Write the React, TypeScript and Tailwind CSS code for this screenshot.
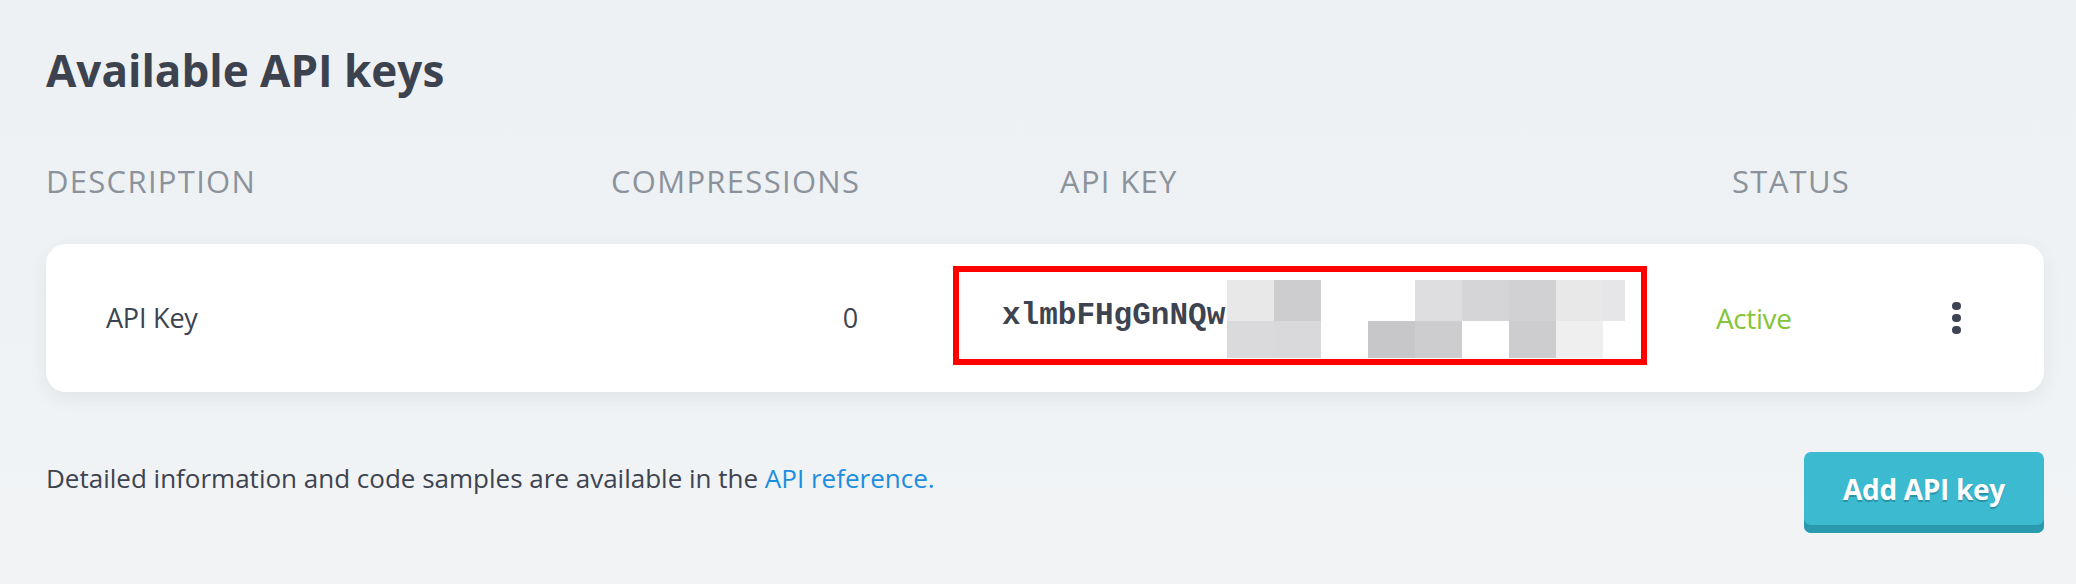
import React from 'react'

// pixelated (redacted) part of the key, [top row, bottom row], null = no block
const blurTop: (string | null)[] = ['#e8e8e9', '#cdcdcf', null, null, '#dedee0', '#d5d5d7', '#d1d1d3', '#e8e8e9', '#e6e6e8']
const blurBottom: (string | null)[] = ['#dadadc', '#d9d9db', null, '#c7c7c9', '#cdcdcf', null, '#cdcdcf', '#efefef', null]

function Redacted() {
  return (
    <div className="absolute left-[268px] top-[8px] flex flex-col">
      <div className="flex h-[41px]">
        {blurTop.map((c, i) => (
          <div
            key={i}
            className={i === 8 ? 'h-full w-[22px]' : 'h-full w-[47px]'}
            style={{ backgroundColor: c ?? 'transparent' }}
          />
        ))}
      </div>
      <div className="flex h-[37px]">
        {blurBottom.map((c, i) => (
          <div
            key={i}
            className={i === 8 ? 'h-full w-[22px]' : 'h-full w-[47px]'}
            style={{ backgroundColor: c ?? 'transparent' }}
          />
        ))}
      </div>
    </div>
  )
}

export default function App() {
  return (
    <div className="min-h-[584px] w-[2076px] bg-gradient-to-b from-[#edf1f3] to-[#f1f3f5] pl-[46px] pr-[32px] pt-[44px] font-['Open_Sans',sans-serif] text-[#3d4350]">
      <h1 className="text-[44px] font-bold leading-[52px] tracking-[0px] text-[#3d424f]">Available API keys</h1>

      {/* table head */}
      <div className="mt-[65px] flex text-[31px] leading-[40px] tracking-[1.3px] text-[#8b929b]">
        <div className="w-[565px]">DESCRIPTION</div>
        <div className="w-[247px] text-right">COMPRESSIONS</div>
        <div className="w-[874px] pl-[202px]">API KEY</div>
        <div>STATUS</div>
      </div>

      {/* key row */}
      <div className="mt-[43px] flex h-[148px] items-center rounded-[20px] bg-white pl-[60px] shadow-[0_6px_18px_rgba(40,60,80,0.07)]">
        <div className="flex w-[752px] items-center justify-between text-[27px] tracking-[-0.2px]">
          <span>API Key</span>
          <span>0</span>
        </div>
        <div className="relative ml-[95px] mt-[-5px] flex h-[99px] w-[694px] items-center border-[6px] border-[#ff0000] pl-[43px]">
          <span className="font-['Liberation_Mono',monospace] text-[31px] font-bold leading-none text-[#3d4350]">xlmbFHgGnNQw</span>
          <Redacted />
        </div>
        <div className="ml-[69px] text-[28px] tracking-[-0.4px] text-[#86c43a]">Active</div>
        <button className="ml-[161px] flex flex-col gap-[3.5px]" aria-label="More">
          <span className="size-[8.5px] rounded-full bg-[#3d4350]" />
          <span className="size-[8.5px] rounded-full bg-[#3d4350]" />
          <span className="size-[8.5px] rounded-full bg-[#3d4350]" />
        </button>
      </div>

      {/* footer */}
      <div className="mt-[60px] flex items-start justify-between">
        <p className="pt-[7px] text-[26px] leading-[39px]">
          Detailed information and code samples are available in the{' '}
          <a href="#" className="text-[#1b8ee0]">API reference.</a>
        </p>
        <button className="h-[81px] w-[240px] rounded-[7px] bg-[#3bbad0] pb-[8px] text-[28px] font-bold tracking-[-0.3px] text-white shadow-[inset_0_-8px_0_#2a9aae] [text-shadow:0_2px_0_#2a93a8]">
          Add API key
        </button>
      </div>
    </div>
  )
}
